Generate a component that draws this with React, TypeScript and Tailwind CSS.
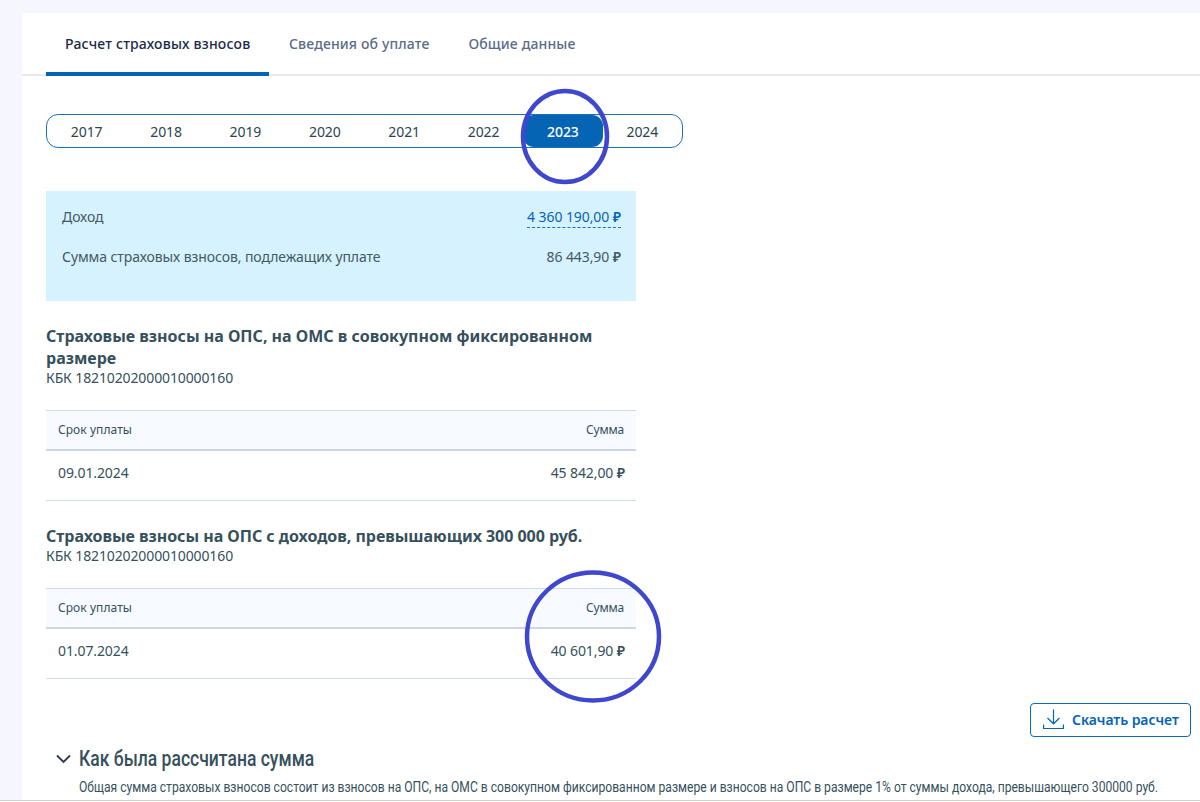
import React from "react";
import clsx from "clsx";

const TABS = [
  { label: "Расчет страховых взносов", active: true },
  { label: "Сведения об уплате", active: false },
  { label: "Общие данные", active: false },
];

const YEARS = ["2017", "2018", "2019", "2020", "2021", "2022", "2023", "2024"];
const SELECTED_YEAR = "2023";

// ── Tabs ──────────────────────────────────────────────────────────────────────
function Tabs() {
  return (
    <nav className="flex h-[63px] border-b-2 border-[#e9eaf0] pl-6">
      {TABS.map((tab) => (
        <a
          key={tab.label}
          className={clsx(
            "-mb-[2px] flex h-[63px] items-center whitespace-nowrap text-[14px] font-medium",
            tab.active
              ? "w-[223px] border-b-4 border-[#0664b5] pl-[19px] pt-[2px] tracking-[0.19px] text-[#1b2b48]"
              : "pb-[2px] pl-5 pr-[19px] tracking-[0.14px] text-[#5b6c89]",
          )}
        >
          {tab.label}
        </a>
      ))}
    </nav>
  );
}

// ── Year switcher ─────────────────────────────────────────────────────────────
function YearSwitcher() {
  return (
    <div className="relative mt-[38px] flex h-[34px] w-[637px] rounded-[12px] border border-[#1a71b8] text-[14px]">
      {YEARS.map((year) => (
        <span
          key={year}
          className={clsx(
            "flex flex-1 items-center justify-center tracking-[-0.1px]",
            year === SELECTED_YEAR
              ? "rounded-[11px] bg-[#0664b5] font-medium text-white"
              : "text-[#2b4450]",
          )}
        >
          {year}
        </span>
      ))}
      {/* Marker around the selected year */}
      <svg className="absolute left-[473px] top-[-27px] h-[98px] w-[90px]" viewBox="0 0 90 98" fill="none">
        <ellipse cx="45" cy="48.5" rx="42" ry="45.5" stroke="#3f47cc" strokeWidth="4.5" />
      </svg>
    </div>
  );
}

function Amount({ value }: { value: string }) {
  return (
    <>
      {value} <span className="font-semibold">₽</span>
    </>
  );
}

// ── Contribution block ────────────────────────────────────────────────────────
interface ContributionProps {
  title: React.ReactNode;
  kbk: string;
  date: string;
  amount: string;
  marked?: boolean;
}

function Contribution({ title, kbk, date, amount, marked }: ContributionProps) {
  return (
    <section>
      <h2 className="-mb-px whitespace-nowrap text-[16px] font-bold leading-[22px] text-[#36505c]">{title}</h2>
      <p className="text-[14px] leading-[20px] tracking-[-0.12px] text-[#36505c]">КБК {kbk}</p>
      <div className="relative mt-[22px] w-[590px] text-[#36505c]">
        <div className="flex h-[41px] items-center justify-between border-b-2 border-t border-b-[#cdd6e8] border-t-[#cfdaec] bg-[#f7faff] px-3 text-[12px]">
          <span className="tracking-[0.07px]">Срок уплаты</span>
          <span className="tracking-[-0.2px]">Сумма</span>
        </div>
        <div className="flex h-[50px] items-center justify-between border-b border-[#cfdaec] pb-[7px] pl-3 pr-[11px] text-[14px] tracking-[-0.1px]">
          <span>{date}</span>
          <span><Amount value={amount} /></span>
        </div>
        {marked && (
          <svg className="absolute left-[478px] top-[-19px] h-[136px] w-[138px]" viewBox="0 0 138 136" fill="none">
            <ellipse cx="69" cy="67.5" rx="66" ry="64" stroke="#3f47cc" strokeWidth="4.5" />
          </svg>
        )}
      </div>
    </section>
  );
}

// ── Download button ───────────────────────────────────────────────────────────
function DownloadButton() {
  return (
    <button className="flex h-[34px] w-[161px] items-center gap-2 whitespace-nowrap rounded-[4px] border border-[#0c6bb9] pb-[2px] pl-[12px] text-[14px] font-semibold text-[#0664b5]">
      <svg className="shrink-0" width="21" height="21" viewBox="0 0 21 21" fill="none" stroke="currentColor" strokeWidth="1.2">
        <path d="M10.5 0.5V14.5M4.5 9L10.5 14.8L16.5 9M0.6 15.5V19.5H20.4V15.5" />
      </svg>
      <span className="tracking-[-0.07px]">Скачать расчет</span>
    </button>
  );
}

export default function App() {
  return (
    <div className="h-[802px] overflow-hidden bg-[#f5f6ff] pl-[22px] pt-[13px] font-['Noto_Sans','Open_Sans',sans-serif]">
      <main className="h-[789px] bg-white">
        <Tabs />
        <div className="pl-6">
          <YearSwitcher />

          <div className="mt-[43px] h-[110px] w-[590px] bg-[#d6f2fe] pl-4 pr-[15px] pt-[16px] text-[14px] leading-[20px] tracking-[-0.08px] text-[#445963]">
            <div className="flex justify-between">
              <span>Доход</span>
              <a className="h-[21px] border-b border-dashed border-[#1a71b8] text-[#0664b5]"><Amount value="4 360 190,00" /></a>
            </div>
            <div className="mt-[19px] flex justify-between">
              <span>Сумма страховых взносов, подлежащих уплате</span>
              <span><Amount value="86 443,90" /></span>
            </div>
          </div>

          <div className="mt-[24px] flex flex-col gap-[24px]">
            <Contribution
              title={<>Страховые взносы на ОПС, на ОМС в совокупном фиксированном<br />размере</>}
              kbk="18210202000010000160"
              date="09.01.2024"
              amount="45 842,00"
            />
            <Contribution
              title={<span className="tracking-[-0.03px]">Страховые взносы на ОПС с доходов, превышающих 300 000 руб.</span>}
              kbk="18210202000010000160"
              date="01.07.2024"
              amount="40 601,90"
              marked
            />
          </div>
        </div>

        <div className="mt-[24px] flex justify-end pr-[9px]">
          <DownloadButton />
        </div>

        {/* Explanation */}
        <div className="mt-[8px] flex pl-[34px] font-['Roboto',sans-serif] text-[#36505c]">
          <svg className="mt-[9px] shrink-0" width="15" height="10" viewBox="0 0 15 10" fill="none" stroke="#2b3556" strokeWidth="1.8">
            <path d="M1 1.5L7.5 8L14 1.5" />
          </svg>
          <div className="ml-2 w-0 whitespace-nowrap">
            <h3 className="w-max origin-left scale-x-[0.797] text-[22px] font-medium leading-[28px]">Как была рассчитана сумма</h3>
            <p className="w-max origin-left scale-x-[0.807] pt-[4px] text-[15px] leading-[20px]">
              Общая сумма страховых взносов состоит из взносов на ОПС, на ОМС в совокупном фиксированном размере и взносов на ОПС в размере 1% от суммы дохода, превышающего 300000 руб.
            </p>
          </div>
        </div>
      </main>
      <div className="relative -ml-[22px] -mt-[2px] h-[2px] border-t border-[#d0cfc8] bg-white" />
    </div>
  );
}
